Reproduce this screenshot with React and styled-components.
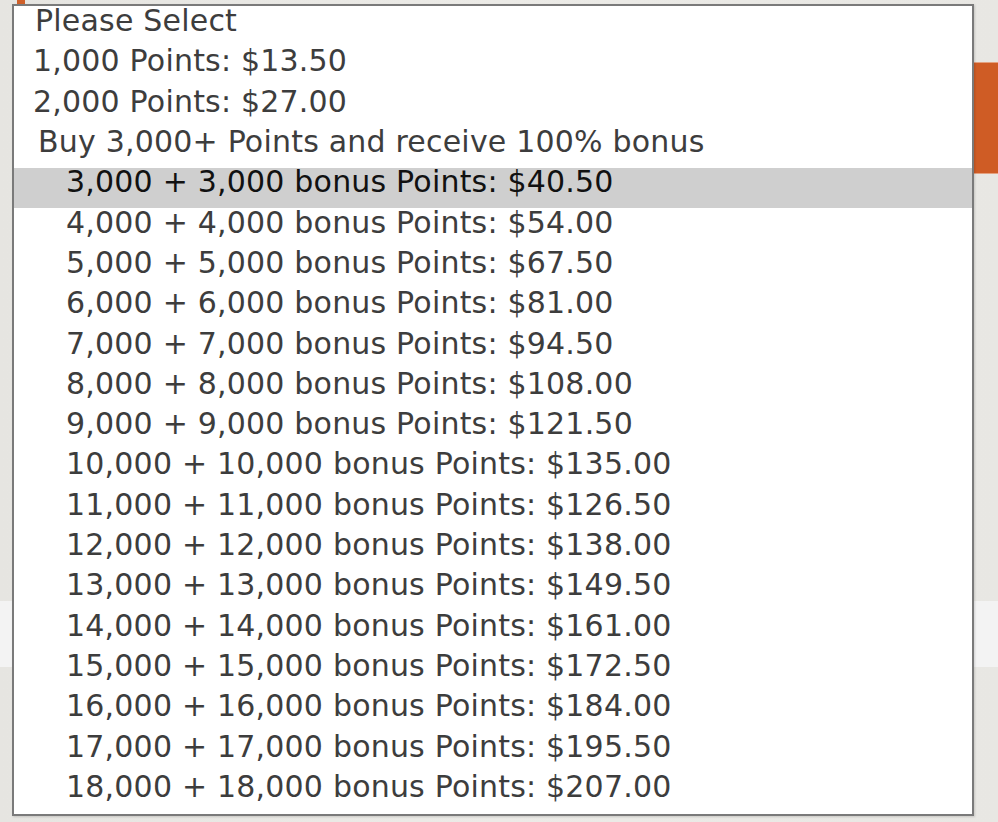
import React from "react";
import styled, { createGlobalStyle } from "styled-components";

const GlobalStyle = createGlobalStyle`
  html, body {
    margin: 0;
    padding: 0;
  }
  body {
    background: #ebeae6;
    font-family: "DejaVu Sans", "Liberation Sans", sans-serif;
  }
`;

const Page = styled.div`
  position: relative;
  width: 998px;
  height: 822px;
  overflow: hidden;
  background: linear-gradient(90deg, #e6e5e1 0%, #ecebe7 50%, #e8e7e3 100%);
`;

const TopTab = styled.div`
  width: 8px;
  height: 4px;
  margin-left: 17px;
  background: #d0602a;
`;

const SideButton = styled.div`
  margin: 58px 0 0 auto;
  width: 24px;
  height: 110px;
  background: #cf5c25;
  border-top: 1px solid #e4a17f;
  border-bottom: 1px solid #e4a17f;
`;

const Band = styled.div`
  margin-top: 427px;
  height: 66px;
  background: #f3f3f3;
`;

const Listbox = styled.ul`
  position: absolute;
  left: 12px;
  top: 4px;
  width: 958px;
  height: 807px;
  margin: 0;
  padding: 1px 0 0;
  list-style: none;
  background: #fff;
  border: 2px solid #7a7a7a;
  box-shadow: 1px 1px 2px rgba(0, 0, 0, 0.15);
  overflow: hidden;
`;

const Option = styled.li`
  height: 40.3px;
  display: flex;
  align-items: center;
  padding-left: ${({ indent }) => indent}px;
  padding-bottom: 13px;
  box-sizing: border-box;
  font-size: 30px;
  letter-spacing: 0.2px;
  color: ${({ selected }) => (selected ? "#111" : "#3d3d3d")};
  background: ${({ selected }) => (selected ? "#cfcfcf" : "transparent")};
  white-space: nowrap;
`;

const GroupLabel = styled(Option)`
  color: #3d3d3d;
`;

const bonus = [
  ["3,000", "$40.50"],
  ["4,000", "$54.00"],
  ["5,000", "$67.50"],
  ["6,000", "$81.00"],
  ["7,000", "$94.50"],
  ["8,000", "$108.00"],
  ["9,000", "$121.50"],
  ["10,000", "$135.00"],
  ["11,000", "$126.50"],
  ["12,000", "$138.00"],
  ["13,000", "$149.50"],
  ["14,000", "$161.00"],
  ["15,000", "$172.50"],
  ["16,000", "$184.00"],
  ["17,000", "$195.50"],
  ["18,000", "$207.00"],
];

export default function App() {
  return (
    <Page>
      <GlobalStyle />
      <TopTab />
      <SideButton />
      <Band />
      <Listbox>
        <Option indent={21}>Please Select</Option>
        <Option indent={19}>1,000 Points: $13.50</Option>
        <Option indent={19}>2,000 Points: $27.00</Option>
        <GroupLabel indent={24}>Buy 3,000+ Points and receive 100% bonus</GroupLabel>
        {bonus.map(([pts, price], i) => (
          <Option key={pts} indent={52} selected={i === 0}>
            {pts} + {pts} bonus Points: {price}
          </Option>
        ))}
      </Listbox>
    </Page>
  );
}
